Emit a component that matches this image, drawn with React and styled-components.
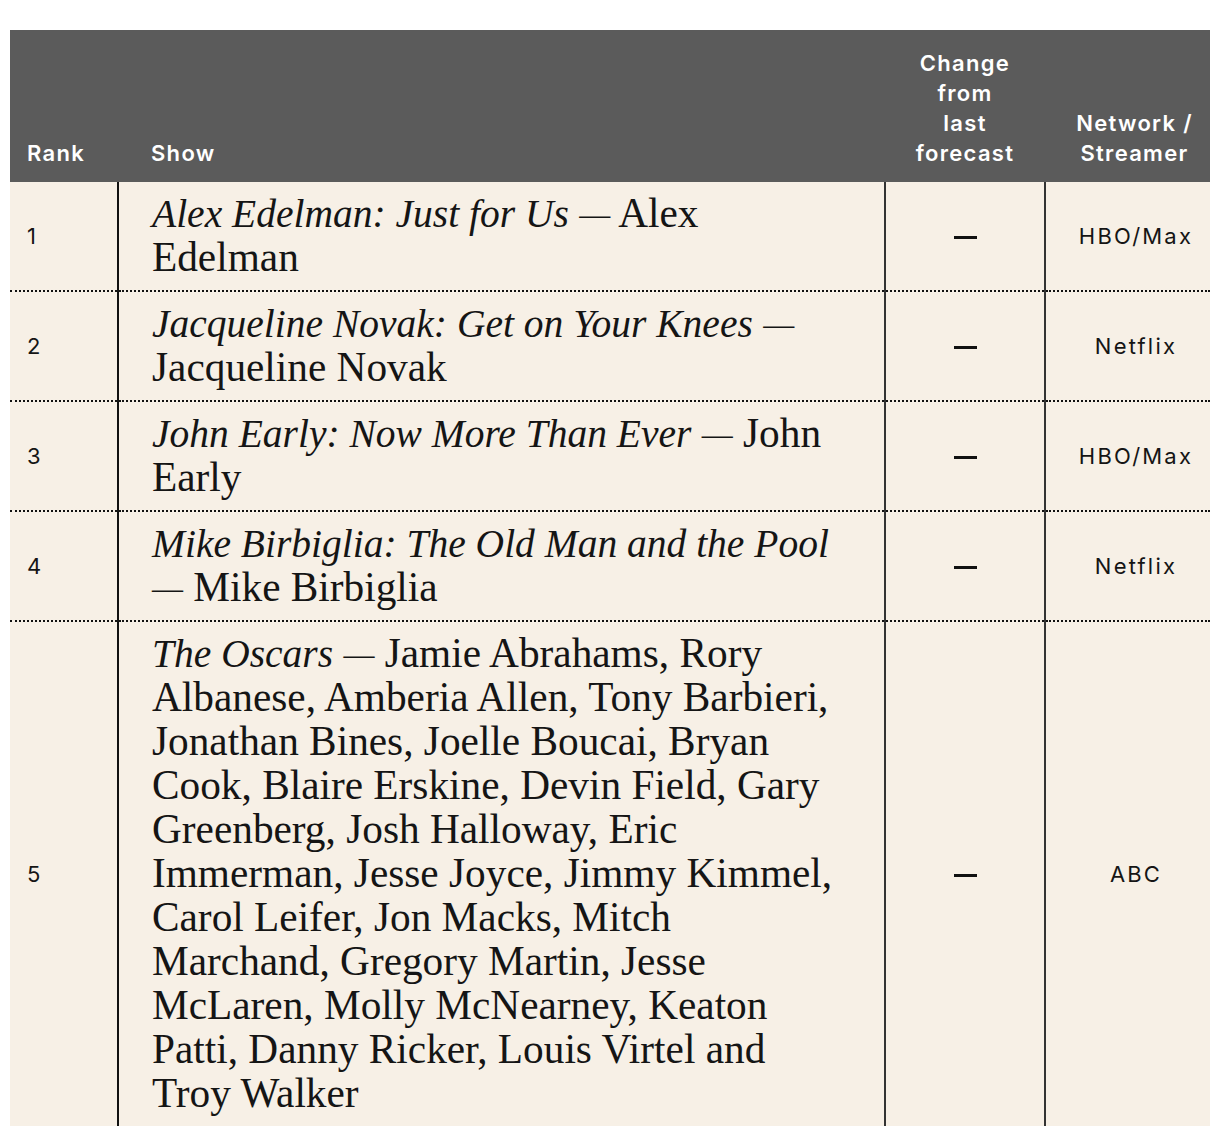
import React from 'react';
import styled, { createGlobalStyle } from 'styled-components';

const GlobalStyle = createGlobalStyle`
  body {
    margin: 0;
    background: #ffffff;
  }
`;

const Page = styled.div`
  padding: 30px 10px 10px;
`;

const Table = styled.table`
  width: 1200px;
  border-collapse: collapse;
  table-layout: fixed;
  background: #f7f0e6;
  color: #151515;
`;

const HeadCell = styled.th`
  background: #5b5b5b;
  color: #fff;
  font-family: 'Inter', sans-serif;
  font-weight: 600;
  font-size: 22px;
  letter-spacing: 1.3px;
  line-height: 30px;
  vertical-align: bottom;
  text-align: ${({ align }) => align || 'center'};
  padding: ${({ pad }) => pad || '0 8px'};
  padding-top: 16px;
  padding-bottom: 14px;
  height: 152px;
  box-sizing: border-box;
`;

const Row = styled.tr`
  border-bottom: 2px dotted #111;
  &:last-child {
    border-bottom: none;
  }
`;

const RankCell = styled.td`
  font-family: 'Inter', sans-serif;
  font-size: 22px;
  letter-spacing: 2px;
  padding: 0 17px;
  vertical-align: middle;
  border-right: 2px solid #111;
`;

const ShowCell = styled.td`
  font-family: 'Liberation Serif', serif;
  font-size: 41.3px;
  line-height: 44px;
  padding: 9px 45px 11px 33px;
  vertical-align: middle;
  border-right: 2px solid #333;
`;

const Title = styled.i`
  font-style: italic;
  font-size: 39.5px;
  line-height: 1;
`;

const EmDash = styled.span`
  font-size: 31px;
  line-height: 1;
  vertical-align: 2px;
`;

const ChangeCell = styled.td`
  text-align: center;
  vertical-align: middle;
  border-right: 2px solid #333;
`;

const Dash = styled.span`
  display: inline-block;
  width: 23px;
  height: 3px;
  background: #111;
  vertical-align: middle;
`;

const NetworkCell = styled.td`
  font-family: 'Inter', sans-serif;
  font-size: 22px;
  letter-spacing: 2.2px;
  text-align: center;
  vertical-align: middle;
  padding: 0 2px 0 18px;
`;

const rows = [
  { rank: 1, title: 'Alex Edelman: Just for Us', writers: 'Alex Edelman', network: 'HBO/Max' },
  { rank: 2, title: 'Jacqueline Novak: Get on Your Knees', writers: 'Jacqueline Novak', network: 'Netflix' },
  { rank: 3, title: 'John Early: Now More Than Ever', writers: 'John Early', network: 'HBO/Max' },
  { rank: 4, title: 'Mike Birbiglia: The Old Man and the Pool', writers: 'Mike Birbiglia', network: 'Netflix' },
  {
    rank: 5,
    title: 'The Oscars',
    writers:
      'Jamie Abrahams, Rory Albanese, Amberia Allen, Tony Barbieri, Jonathan Bines, Joelle Boucai, Bryan Cook, Blaire Erskine, Devin Field, Gary Greenberg, Josh Halloway, Eric Immerman, Jesse Joyce, Jimmy Kimmel, Carol Leifer, Jon Macks, Mitch Marchand, Gregory Martin, Jesse McLaren, Molly McNearney, Keaton Patti, Danny Ricker, Louis Virtel and Troy Walker',
    network: 'ABC',
  },
];

const App = () => (
  <Page>
    <GlobalStyle />
    <Table>
      <colgroup>
        <col style={{ width: 108 }} />
        <col style={{ width: 767 }} />
        <col style={{ width: 160 }} />
        <col style={{ width: 165 }} />
      </colgroup>
      <thead>
        <tr>
          <HeadCell align="left" pad="0 17px">Rank</HeadCell>
          <HeadCell align="left" pad="0 33px">Show</HeadCell>
          <HeadCell>
            Change
            <br />
            from
            <br />
            last
            <br />
            forecast
          </HeadCell>
          <HeadCell pad="0 2px 0 16px">
            Network /
            <br />
            Streamer
          </HeadCell>
        </tr>
      </thead>
      <tbody>
        {rows.map((r) => (
          <Row key={r.rank}>
            <RankCell>{r.rank}</RankCell>
            <ShowCell>
              <Title>{r.title}</Title> <EmDash>—</EmDash> {r.writers}
            </ShowCell>
            <ChangeCell>
              <Dash />
            </ChangeCell>
            <NetworkCell>{r.network}</NetworkCell>
          </Row>
        ))}
      </tbody>
    </Table>
  </Page>
);

export default App;
